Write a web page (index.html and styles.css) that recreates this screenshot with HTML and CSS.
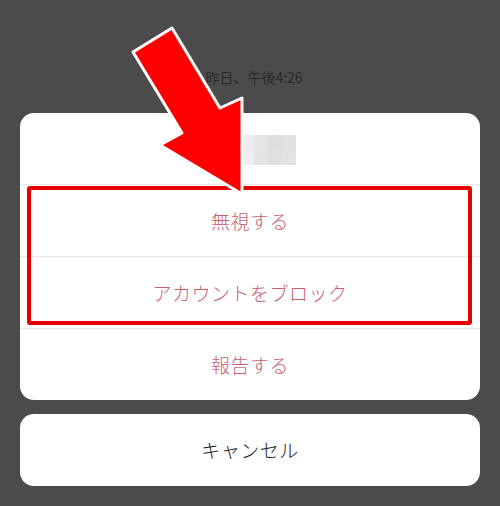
FILE: index.html
```html
<!DOCTYPE html>
<html lang="ja">
<head>
<meta charset="utf-8">
<link rel="stylesheet" href="styles.css">
</head>
<body>
<div class="screen">
  <div class="timestamp">昨日、午後4:26</div>
  <div class="sheet">
    <div class="header">
      <div class="mosaic">
        <span class="m1"></span><span class="m2"></span><span class="m3"></span><span class="m4"></span>
        <span class="m5"></span><span class="m6"></span><span class="m7"></span><span class="m8"></span>
      </div>
    </div>
    <div class="row danger">無視する</div>
    <div class="row danger">アカウントをブロック</div>
    <div class="row danger last">報告する</div>
  </div>
  <div class="sheet cancel">
    <div class="row last">キャンセル</div>
  </div>
  <div class="highlight"></div>
  <svg class="arrow" width="500" height="506" viewBox="0 0 500 506">
    <polygon points="133,52 172,28 220,108 242,98 242,194 160,145 182,133" fill="#ff0000" stroke="#ffffff" stroke-width="3" stroke-linejoin="round"/>
  </svg>
</div>
</body>
</html>
```

FILE: styles.css
```css
html, body {
  margin: 0;
  padding: 0;
  background: #4b4b4b;
}
.screen {
  position: relative;
  width: 500px;
  height: 506px;
  box-sizing: border-box;
  padding: 66px 20px 0 20px;
  display: flex;
  flex-direction: column;
  font-family: "Noto Sans CJK JP", "Noto Sans", sans-serif;
  overflow: hidden;
}
.timestamp {
  height: 22px;
  line-height: 22px;
  text-align: center;
  font-size: 14px;
  color: #2a2a2a;
  margin-bottom: 25px;
  padding-left: 8px;
}
.sheet {
  background: #ffffff;
  border-radius: 14px;
  overflow: hidden;
  display: flex;
  flex-direction: column;
}
.header {
  height: 72px;
  box-sizing: border-box;
  border-bottom: 1px solid #e8e8e8;
  display: flex;
  align-items: center;
  justify-content: center;
}
.mosaic {
  display: grid;
  grid-template-columns: repeat(4, 14px);
  grid-template-rows: repeat(2, 15px);
  margin-left: 36px;
  margin-top: 2px;
}
.mosaic span { display: block; }
.m1 { background: #ececec; }
.m2 { background: #e6e6e6; }
.m3 { background: #dedede; }
.m4 { background: #e2e2e2; }
.m5 { background: #eeeeee; }
.m6 { background: #e4e4e4; }
.m7 { background: #e0e0e0; }
.m8 { background: #e3e3e3; }
.row {
  height: 72px;
  box-sizing: border-box;
  border-bottom: 1px solid #e8e8e8;
  display: flex;
  align-items: center;
  justify-content: center;
  font-size: 19px;
  font-weight: 300;
  letter-spacing: 0.5px;
  color: #1a1a1a;
  padding-bottom: 1px;
}
.row.last {
  border-bottom: none;
  height: 71px;
}
.row.danger {
  color: #c9606f;
}
.cancel {
  margin-top: 14px;
}
.cancel .row {
  height: 72px;
}
.highlight {
  position: absolute;
  left: 27px;
  top: 186px;
  width: 437px;
  height: 131px;
  border: 4px solid #e60000;
  border-radius: 3px;
}
.arrow {
  position: absolute;
  left: 0;
  top: 0;
}
```
